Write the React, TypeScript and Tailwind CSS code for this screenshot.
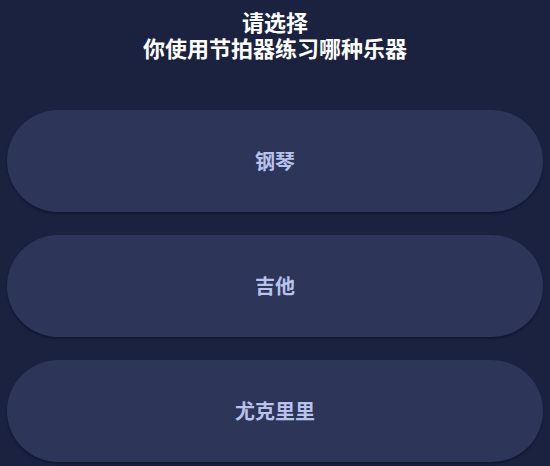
const OPTIONS = ["钢琴", "吉他", "尤克里里"];

export default function App() {
  return (
    <div
      className="h-[466px] w-[550px] overflow-hidden bg-[#1b2240] px-[7px]"
      style={{ fontFamily: '"Noto Sans CJK SC", "Noto Sans", sans-serif' }}
    >
      <div className="flex flex-col items-center pt-[8px] text-[22px] font-bold leading-[26px] text-white">
        <h1>请选择</h1>
        <p>你使用节拍器练习哪种乐器</p>
      </div>

      <div className="mt-[50px] flex flex-col gap-[23px]">
        {OPTIONS.map((o) => (
          <button
            key={o}
            type="button"
            className="flex h-[102px] w-full items-center justify-center rounded-full bg-[#2d3559] text-[20px] font-bold text-[#b8c3ec] shadow-[0_2px_2px_rgba(10,14,35,0.5)]"
          >
            {o}
          </button>
        ))}
      </div>
    </div>
  );
}
